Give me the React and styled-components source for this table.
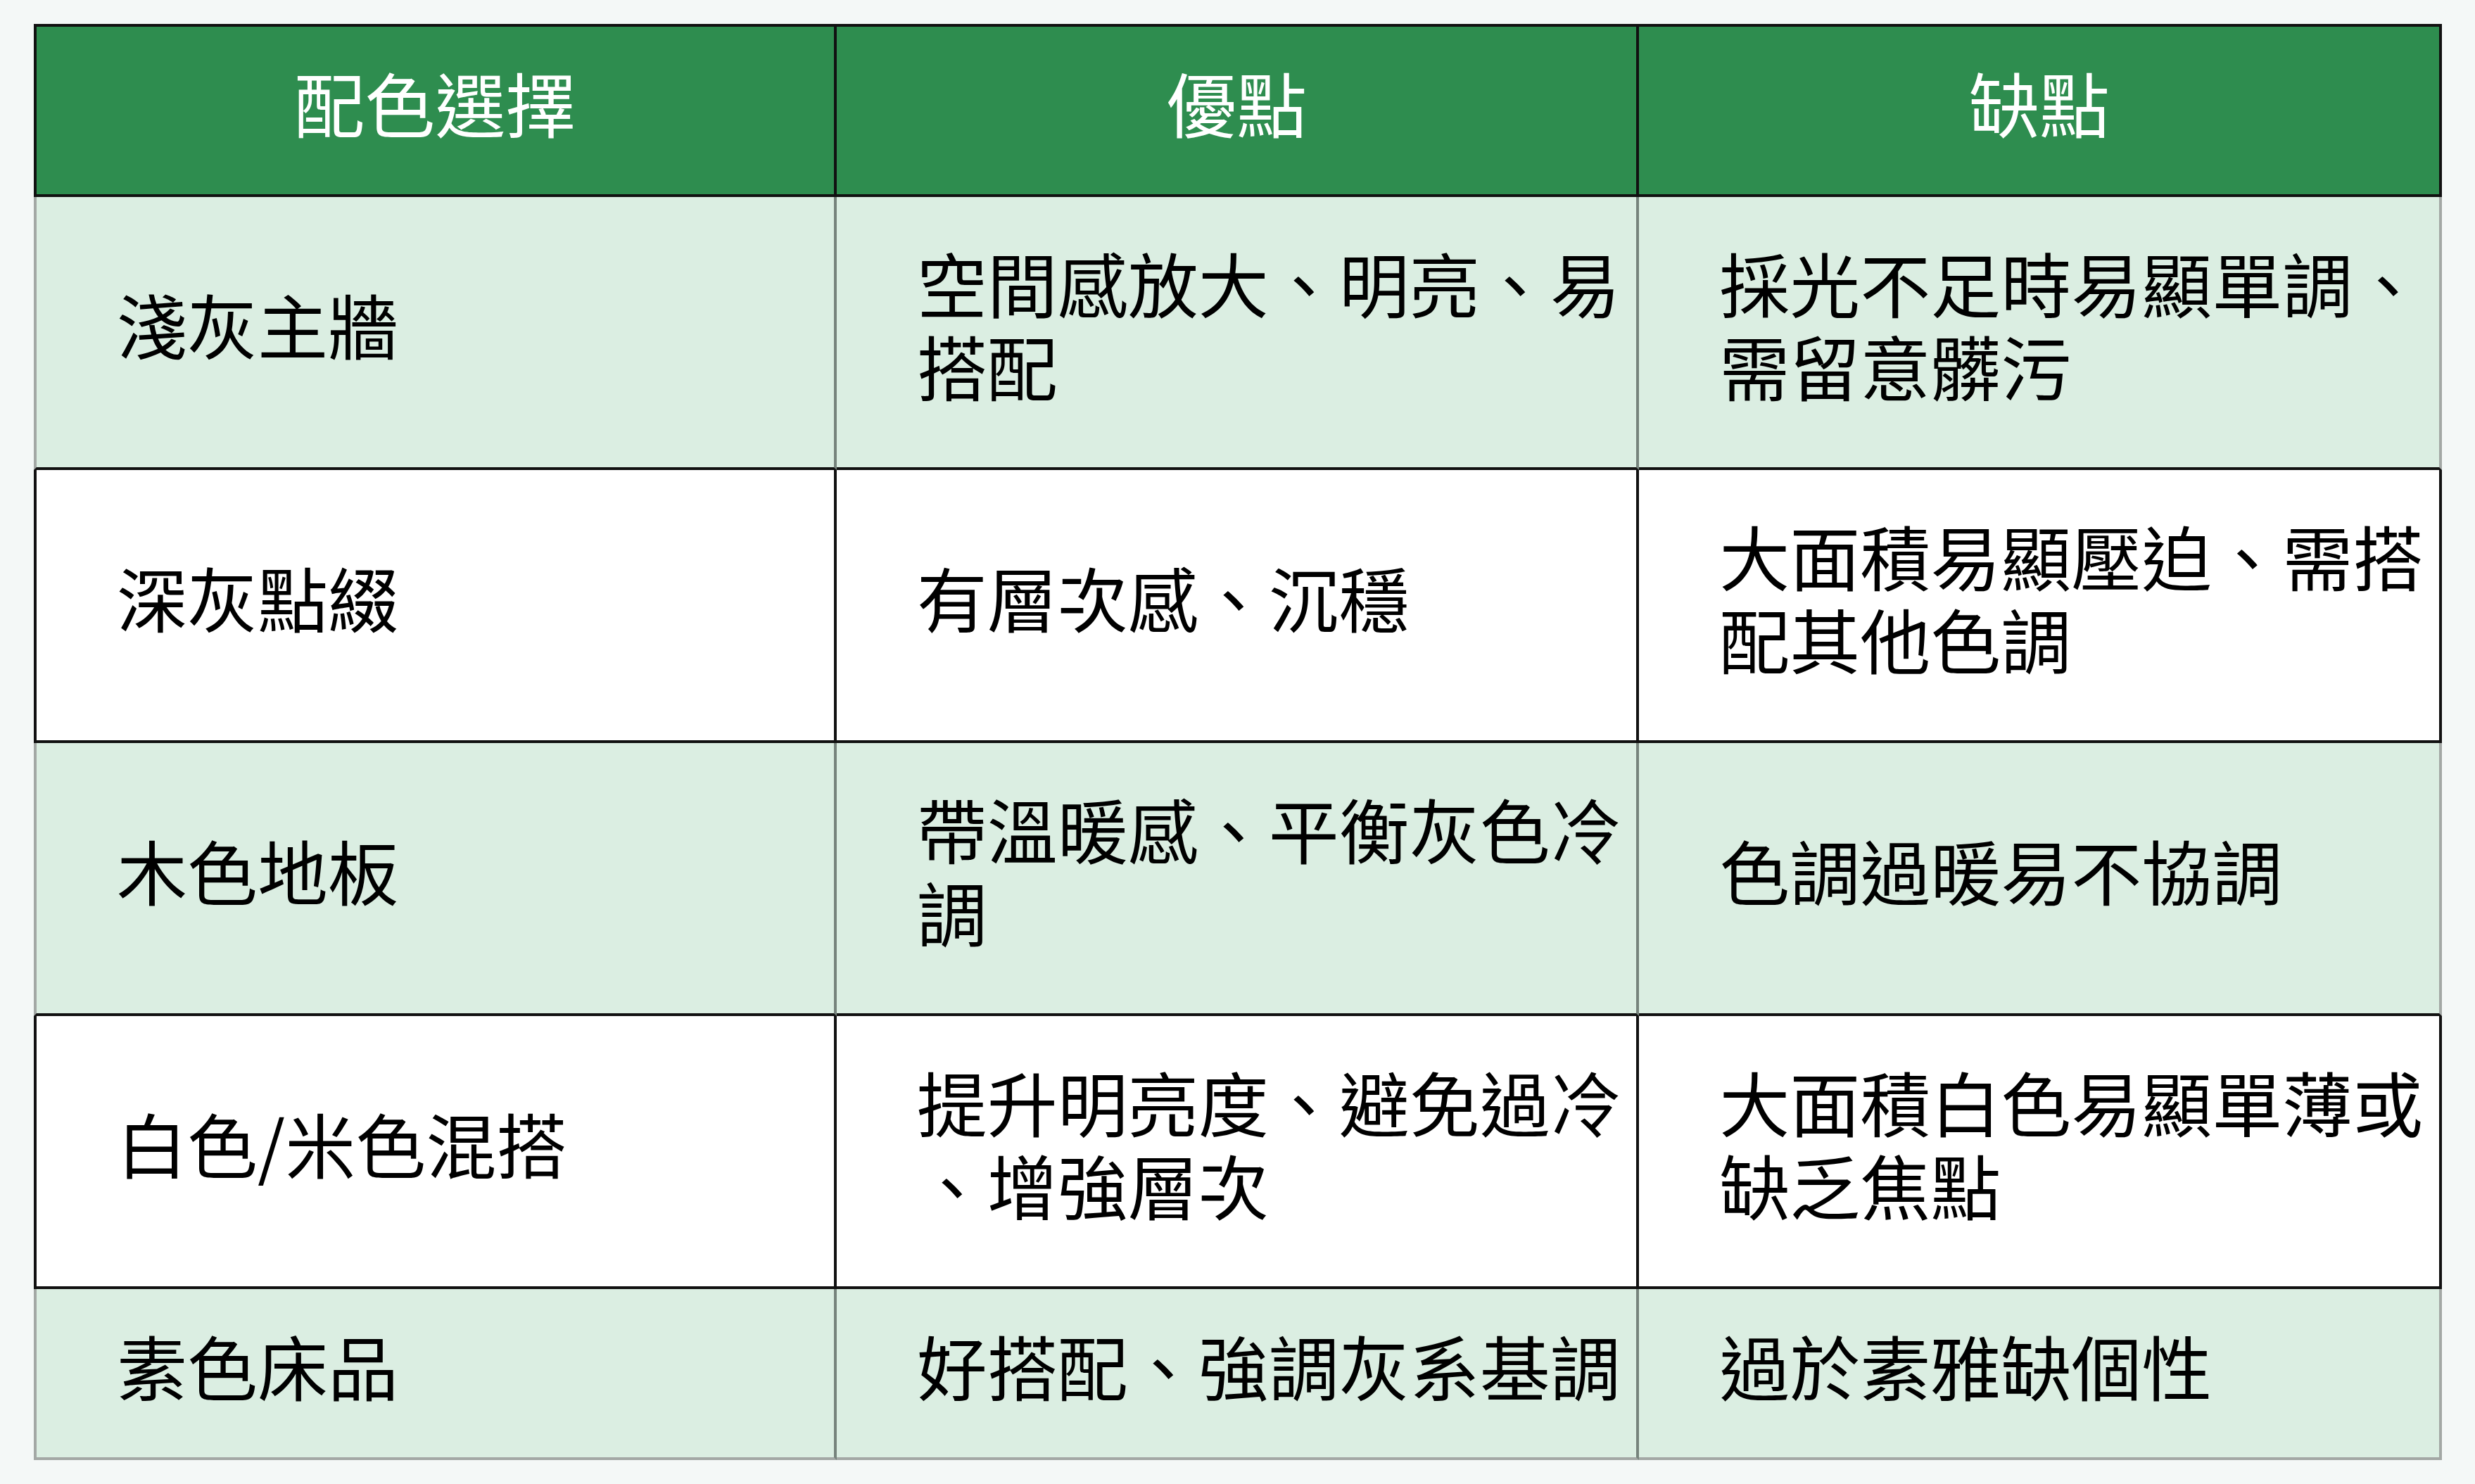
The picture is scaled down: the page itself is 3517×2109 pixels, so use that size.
import React from 'react';
import styled, { createGlobalStyle } from 'styled-components';

const GlobalStyle = createGlobalStyle`
  html, body {
    margin: 0;
    padding: 0;
    background: #f4f8f7;
  }
  body {
    font-family: "Noto Sans CJK TC", "Noto Sans", sans-serif;
  }
`;

const Page = styled.div`
  width: 3517px;
  height: 2109px;
  box-sizing: border-box;
  padding: 34px 0 0 48px;
  overflow: hidden;
`;

const Table = styled.table`
  width: 3422px;
  table-layout: fixed;
  border-collapse: separate;
  border-spacing: 0;
  font-size: 100px;
  line-height: 118px;
  color: #000;
`;

const HeadCell = styled.th`
  box-sizing: border-box;
  height: 246px;
  padding: 0 10px 24px;
  background: #2e8d4f;
  color: #fff;
  font-weight: 400;
  text-align: center;
  vertical-align: middle;
  border-top: 4px solid #111;
  border-right: 4px solid #111;
  border-bottom: 4px solid #111;

  &:first-child {
    border-left: 4px solid #111;
  }
`;

const Cell = styled.td`
  box-sizing: border-box;
  height: ${(p) => (p.$last ? 243 : 388)}px;
  padding: 0 10px 24px 114px;
  background: ${(p) => (p.$tint ? '#dbeee2' : '#fff')};
  text-align: left;
  vertical-align: middle;
  line-break: anywhere;
  border-right: 4px solid ${(p) => (p.$tint ? '#76837c' : '#111')};
  border-bottom: 4px solid ${(p) => (p.$last ? '#a3a8a5' : '#111')};

  &:first-child {
    border-left: 4px solid ${(p) => (p.$tint ? '#a3a8a5' : '#111')};
  }
  &:last-child {
    border-right-color: ${(p) => (p.$tint ? '#a3a8a5' : '#111')};
  }
`;

const headers = ['配色選擇', '優點', '缺點'];

const rows = [
  ['淺灰主牆', '空間感放大、明亮、易搭配', '採光不足時易顯單調、需留意髒污'],
  ['深灰點綴', '有層次感、沉穩', '大面積易顯壓迫、需搭配其他色調'],
  ['木色地板', '帶溫暖感、平衡灰色冷調', '色調過暖易不協調'],
  ['白色/米色混搭', '提升明亮度、避免過冷、增強層次', '大面積白色易顯單薄或缺乏焦點'],
  ['素色床品', '好搭配、強調灰系基調', '過於素雅缺個性'],
];

export default function App() {
  return (
    <Page>
      <GlobalStyle />
      <Table>
        <thead>
          <tr>
            {headers.map((h) => (
              <HeadCell key={h}>{h}</HeadCell>
            ))}
          </tr>
        </thead>
        <tbody>
          {rows.map((row, i) => (
            <tr key={row[0]}>
              {row.map((text, j) => (
                <Cell key={j} $tint={i % 2 === 0} $last={i === rows.length - 1}>
                  {text}
                </Cell>
              ))}
            </tr>
          ))}
        </tbody>
      </Table>
    </Page>
  );
}
